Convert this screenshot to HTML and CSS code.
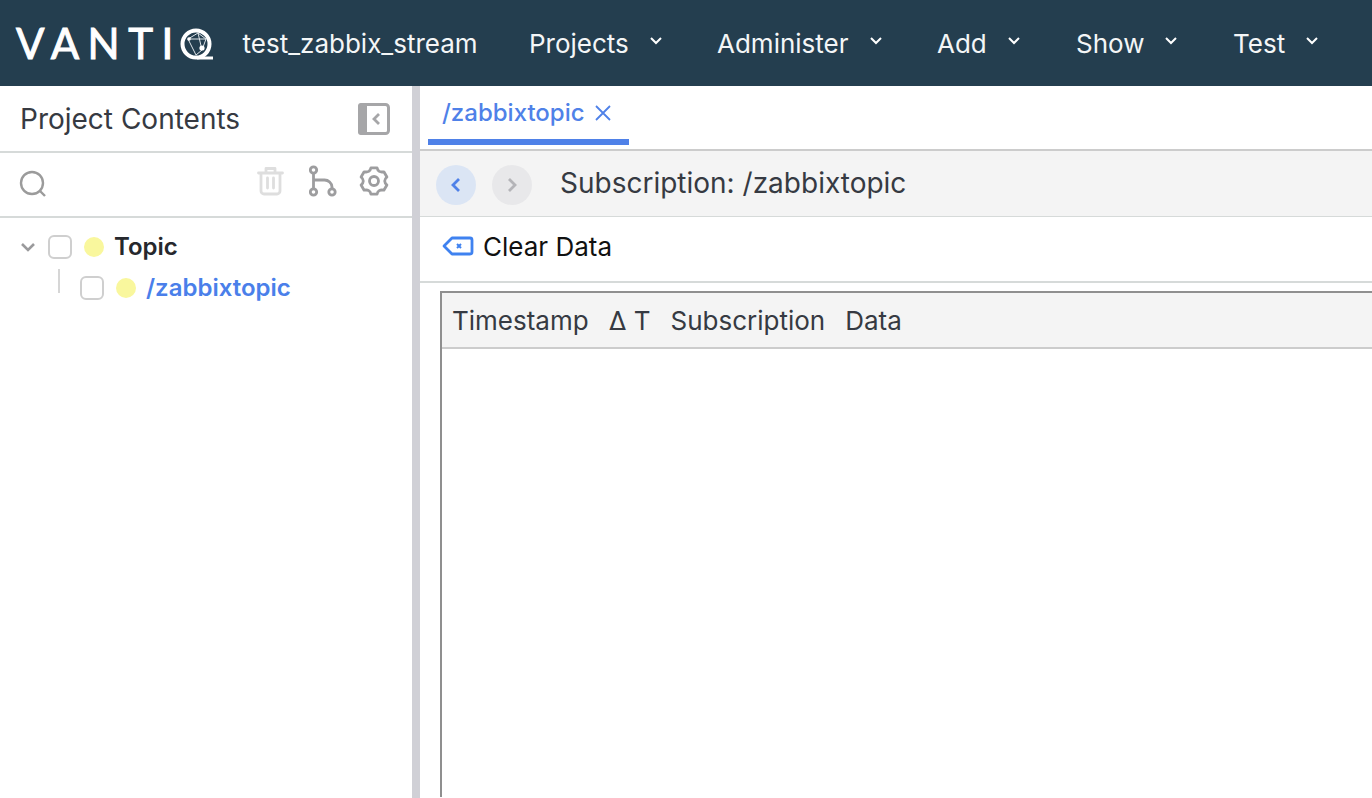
FILE: index.html
```html
<!DOCTYPE html>
<html lang="en">
<head>
    <meta charset="UTF-8">
    <title>test_zabbix_stream</title>
    <link rel="stylesheet" href="styles.css">
</head>
<body>
    <header class="topbar">
        <div class="logo">
            <span class="logo-text">VANTI</span>
            <svg class="logo-q" width="34" height="34" viewBox="0 0 34 34">
                <circle cx="16" cy="16" r="13.500" fill="none" stroke="#fff" stroke-width="4"/>
                <path d="M17 30h16" stroke="#fff" stroke-width="3" fill="none"/>
                <path d="M8 11l10-6 8 6-4 11-6 5-8-16zM18 5l4 17M8 11l18 0" stroke="#dfe5e9" stroke-width="1" fill="none"/>
                <circle cx="22" cy="20" r="2.600" fill="#fff"/>
                <circle cx="9" cy="11" r="1.800" fill="#fff"/>
            </svg>
        </div>
        <span class="app-name">test_zabbix_stream</span>
        <nav class="menu">
            <a class="menu-item projects">Projects <svg class="caret" width="14" height="9" viewBox="0 0 14 9"><path d="M2 2l5 5 5-5"/></svg></a>
            <a class="menu-item administer">Administer <svg class="caret" width="14" height="9" viewBox="0 0 14 9"><path d="M2 2l5 5 5-5"/></svg></a>
            <a class="menu-item add">Add <svg class="caret" width="14" height="9" viewBox="0 0 14 9"><path d="M2 2l5 5 5-5"/></svg></a>
            <a class="menu-item show">Show <svg class="caret" width="14" height="9" viewBox="0 0 14 9"><path d="M2 2l5 5 5-5"/></svg></a>
            <a class="menu-item">Test <svg class="caret" width="14" height="9" viewBox="0 0 14 9"><path d="M2 2l5 5 5-5"/></svg></a>
        </nav>
    </header>

    <div class="content">
        <aside class="sidebar">
            <div class="side-head">
                <span>Project Contents</span>
                <svg width="32" height="32" viewBox="0 0 32 32">
                    <rect x="1.500" y="1.500" width="29" height="29" rx="3" fill="#fff" stroke="#a6a6a8" stroke-width="3"/>
                    <rect x="0" y="0" width="9" height="32" rx="3" fill="#a6a6a8"/>
                    <path d="M21 11l-5 5 5 5" fill="none" stroke="#a6a6a8" stroke-width="2.800"/>
                </svg>
            </div>
            <div class="side-tools">
                <svg class="search" width="30" height="30" viewBox="0 0 30 30">
                    <circle cx="14" cy="14" r="11" fill="none" stroke="#9b9b9b" stroke-width="2.400"/>
                    <path d="M22 22l5 5" stroke="#9b9b9b" stroke-width="2.400"/>
                </svg>
                <div class="tool-icons">
                    <svg width="27" height="30" viewBox="0 0 27 30" fill="none" stroke="#dedede" stroke-width="2.800" stroke-linejoin="round" stroke-linecap="round">
                        <path d="M1.500 7h24M9 7V2.500h9V7M4 7v18a3 3 0 0 0 3 3h13a3 3 0 0 0 3-3V7M10.500 12v10M16.500 12v10"/>
                    </svg>
                    <svg width="28" height="32" viewBox="0 0 28 32" fill="none" stroke="#9d9d9f" stroke-width="2.800">
                        <circle cx="4.500" cy="5" r="3.200"/>
                        <circle cx="4.500" cy="27" r="3.200"/>
                        <circle cx="23" cy="27" r="3.200"/>
                        <path d="M4.500 8.500v15M4.500 15h11a7.500 7.500 0 0 1 7.500 7v1.500"/>
                    </svg>
                    <svg class="gear" width="30" height="30" viewBox="0 0 30 30" fill="none" stroke="#9d9d9f" stroke-width="2.800" stroke-linejoin="round">
                        <circle cx="15" cy="15" r="4.500"/>
                        <path d="M11.960 1.850L18.040 1.850Q19 7 24.870 5.790L27.910 11.050Q23.500 15 27.910 18.950L24.870 24.210Q19 23 18.040 28.150L11.960 28.150Q11 23 5.130 24.210L2.090 18.950Q6.500 15 2.090 11.050L5.130 5.790Q11 7 11.960 1.850Z"/>
                    </svg>
                </div>
            </div>
            <ul class="tree">
                <li class="tree-row">
                    <svg class="twist" width="16" height="10" viewBox="0 0 16 10"><path d="M2 2l6 6 6-6"/></svg>
                    <span class="check"></span>
                    <span class="dot"></span>
                    <b>Topic</b>
                </li>
                <li class="tree-row child">
                    <span class="guide"></span>
                    <span class="check"></span>
                    <span class="dot"></span>
                    <b class="link">/zabbixtopic</b>
                </li>
            </ul>
        </aside>
        <div class="splitter"></div>
        <main class="main">
            <div class="tabs">
                <div class="tab">
                    <span>/zabbixtopic</span>
                    <svg width="18" height="18" viewBox="0 0 18 18"><path d="M2 2l14 14M16 2L2 16" stroke="#4f81e8" stroke-width="1.800" fill="none"/></svg>
                </div>
            </div>
            <div class="sub-bar">
                <span class="round back"><svg width="12" height="16" viewBox="0 0 12 16"><path d="M9 2L3 8l6 6"/></svg></span>
                <span class="round next"><svg width="12" height="16" viewBox="0 0 12 16"><path d="M3 2l6 6-6 6"/></svg></span>
                <span class="sub-title">Subscription: /zabbixtopic</span>
            </div>
            <div class="actions">
                <svg width="32" height="20" viewBox="0 0 32 20" fill="none">
                    <path d="M10 2h18a2 2 0 0 1 2 2v12a2 2 0 0 1-2 2H10l-8-8z" stroke="#3f82f0" stroke-width="2.800" stroke-linejoin="round"/>
                    <path d="M15 8l4 4M19 8l-4 4" stroke="#3f82f0" stroke-width="2"/>
                </svg>
                <span>Clear Data</span>
            </div>
            <section class="panel">
                <div class="panel-head">
                    <span>Timestamp</span>
                    <span>Δ T</span>
                    <span>Subscription</span>
                    <span>Data</span>
                </div>
            </section>
        </main>
    </div>
</body>
</html>
```

FILE: styles.css
```css
* {
    box-sizing: border-box;
}
html, body {
    height: 100%;
}
body {
    margin: 0;
    overflow: hidden;
    font-family: Inter, "Noto Sans", sans-serif;
    font-size: 26px;
    color: #363a42;
    background-color: #fff;
    display: flex;
    flex-direction: column;
}

/* top bar */
.topbar {
    height: 86px;
    flex: none;
    display: flex;
    align-items: center;
    background-color: #243e4f;
    color: #f4f6f7;
    white-space: nowrap;
}
.logo {
    display: flex;
    align-items: center;
    margin-left: 16px;
    width: 227px;
}
.logo-text {
    font-family: Lato, sans-serif;
    font-size: 42px;
    letter-spacing: 8.500px;
    color: #fff;
    -webkit-text-stroke: 1px #fff;
}
.logo-q {
    margin-left: -2px;
    margin-top: 3px;
}
.app-name {
    width: 287px;
}
.menu {
    display: flex;
}
.menu-item {
    display: flex;
    align-items: center;
    width: 139px;
}
.projects {
    width: 188px;
}
.administer {
    width: 220px;
}
.add {
    width: 139px;
}
.show {
    width: 157px;
}
.caret {
    margin-left: 20px;
    margin-top: -5px;
}
.caret path {
    fill: none;
    stroke: #fff;
    stroke-width: 2;
}

/* project contents */
.content {
    flex: 1;
    display: flex;
    min-height: 0;
}
.sidebar {
    width: 412px;
    flex: none;
}
.side-head {
    height: 67px;
    padding: 0 22px 0 20px;
    display: flex;
    align-items: center;
    justify-content: space-between;
    font-size: 28px;
    border-bottom: 2px solid #d6dad9;
}
.side-tools {
    height: 65px;
    padding: 0 23px 2px 18px;
    display: flex;
    align-items: center;
    justify-content: space-between;
    border-bottom: 2px solid #d6dad9;
}
.tool-icons {
    display: flex;
    align-items: center;
    gap: 25px;
    margin-bottom: 6px;
}
.gear {
    margin-left: -3px;
}
.tree {
    list-style: none;
    margin: 0;
    padding: 8px 0 0 20px;
}
.tree-row {
    height: 41px;
    display: flex;
    align-items: center;
    font-size: 24px;
}
.tree-row b {
    font-weight: 600;
    color: #26282d;
}
.tree-row .link {
    color: #4a7fea;
}
.twist {
    margin-right: 12px;
}
.twist path {
    fill: none;
    stroke: #9a9a9c;
    stroke-width: 2.600;
}
.check {
    width: 24px;
    height: 24px;
    border: 2px solid #cfcfcf;
    border-radius: 6px;
    background-color: #fff;
}
.dot {
    width: 20px;
    height: 20px;
    border-radius: 50%;
    background-color: #f9f79d;
    margin: 0 10px 0 12px;
}
.child {
    padding-left: 60px;
    position: relative;
}
.guide {
    position: absolute;
    left: 38px;
    top: 2px;
    height: 24px;
    border-left: 2px solid #d6d6d6;
}

.splitter {
    width: 8px;
    flex: none;
    background-color: #d0d0d6;
}

/* main area */
.main {
    flex: 1;
    min-width: 0;
}
.tabs {
    height: 65px;
    padding-left: 8px;
    border-bottom: 2px solid #ccc;
    display: flex;
}
.tab {
    width: 201px;
    height: 59px;
    padding: 0 0 0 14px;
    display: flex;
    align-items: center;
    gap: 9px;
    font-size: 24px;
    font-weight: 500;
    color: #4f81e8;
    border-bottom: 6px solid #4f81e8;
}
.sub-bar {
    height: 66px;
    padding-left: 16px;
    display: flex;
    align-items: center;
    background-color: #f4f4f4;
    border-bottom: 1px solid #d6dad9;
}
.round {
    width: 40px;
    height: 40px;
    margin-top: 2px;
    border-radius: 50%;
    display: flex;
    align-items: center;
    justify-content: center;
}
.round path {
    fill: none;
    stroke-width: 2.800;
}
.back {
    background-color: #dbe5f4;
}
.back path {
    stroke: #4f81e8;
}
.next {
    background-color: #e8e8ea;
    margin-left: 16px;
}
.next path {
    stroke: #b4b4b8;
}
.sub-title {
    margin-left: 28px;
    margin-bottom: 2px;
    font-size: 28px;
}
.actions {
    height: 66px;
    padding: 0 0 6px 22px;
    display: flex;
    align-items: center;
    gap: 9px;
    color: #111;
    border-bottom: 2px solid #d6dad9;
}
.panel {
    margin: 8px 0 0 20px;
    height: 506px;
    border: 2px solid #8f8f8f;
    border-right: 0;
    border-bottom: 0;
}
.panel-head {
    height: 56px;
    padding-left: 10px;
    display: flex;
    align-items: center;
    gap: 20px;
    background-color: #f4f4f4;
    border-bottom: 2px solid #ccc;
}
```
